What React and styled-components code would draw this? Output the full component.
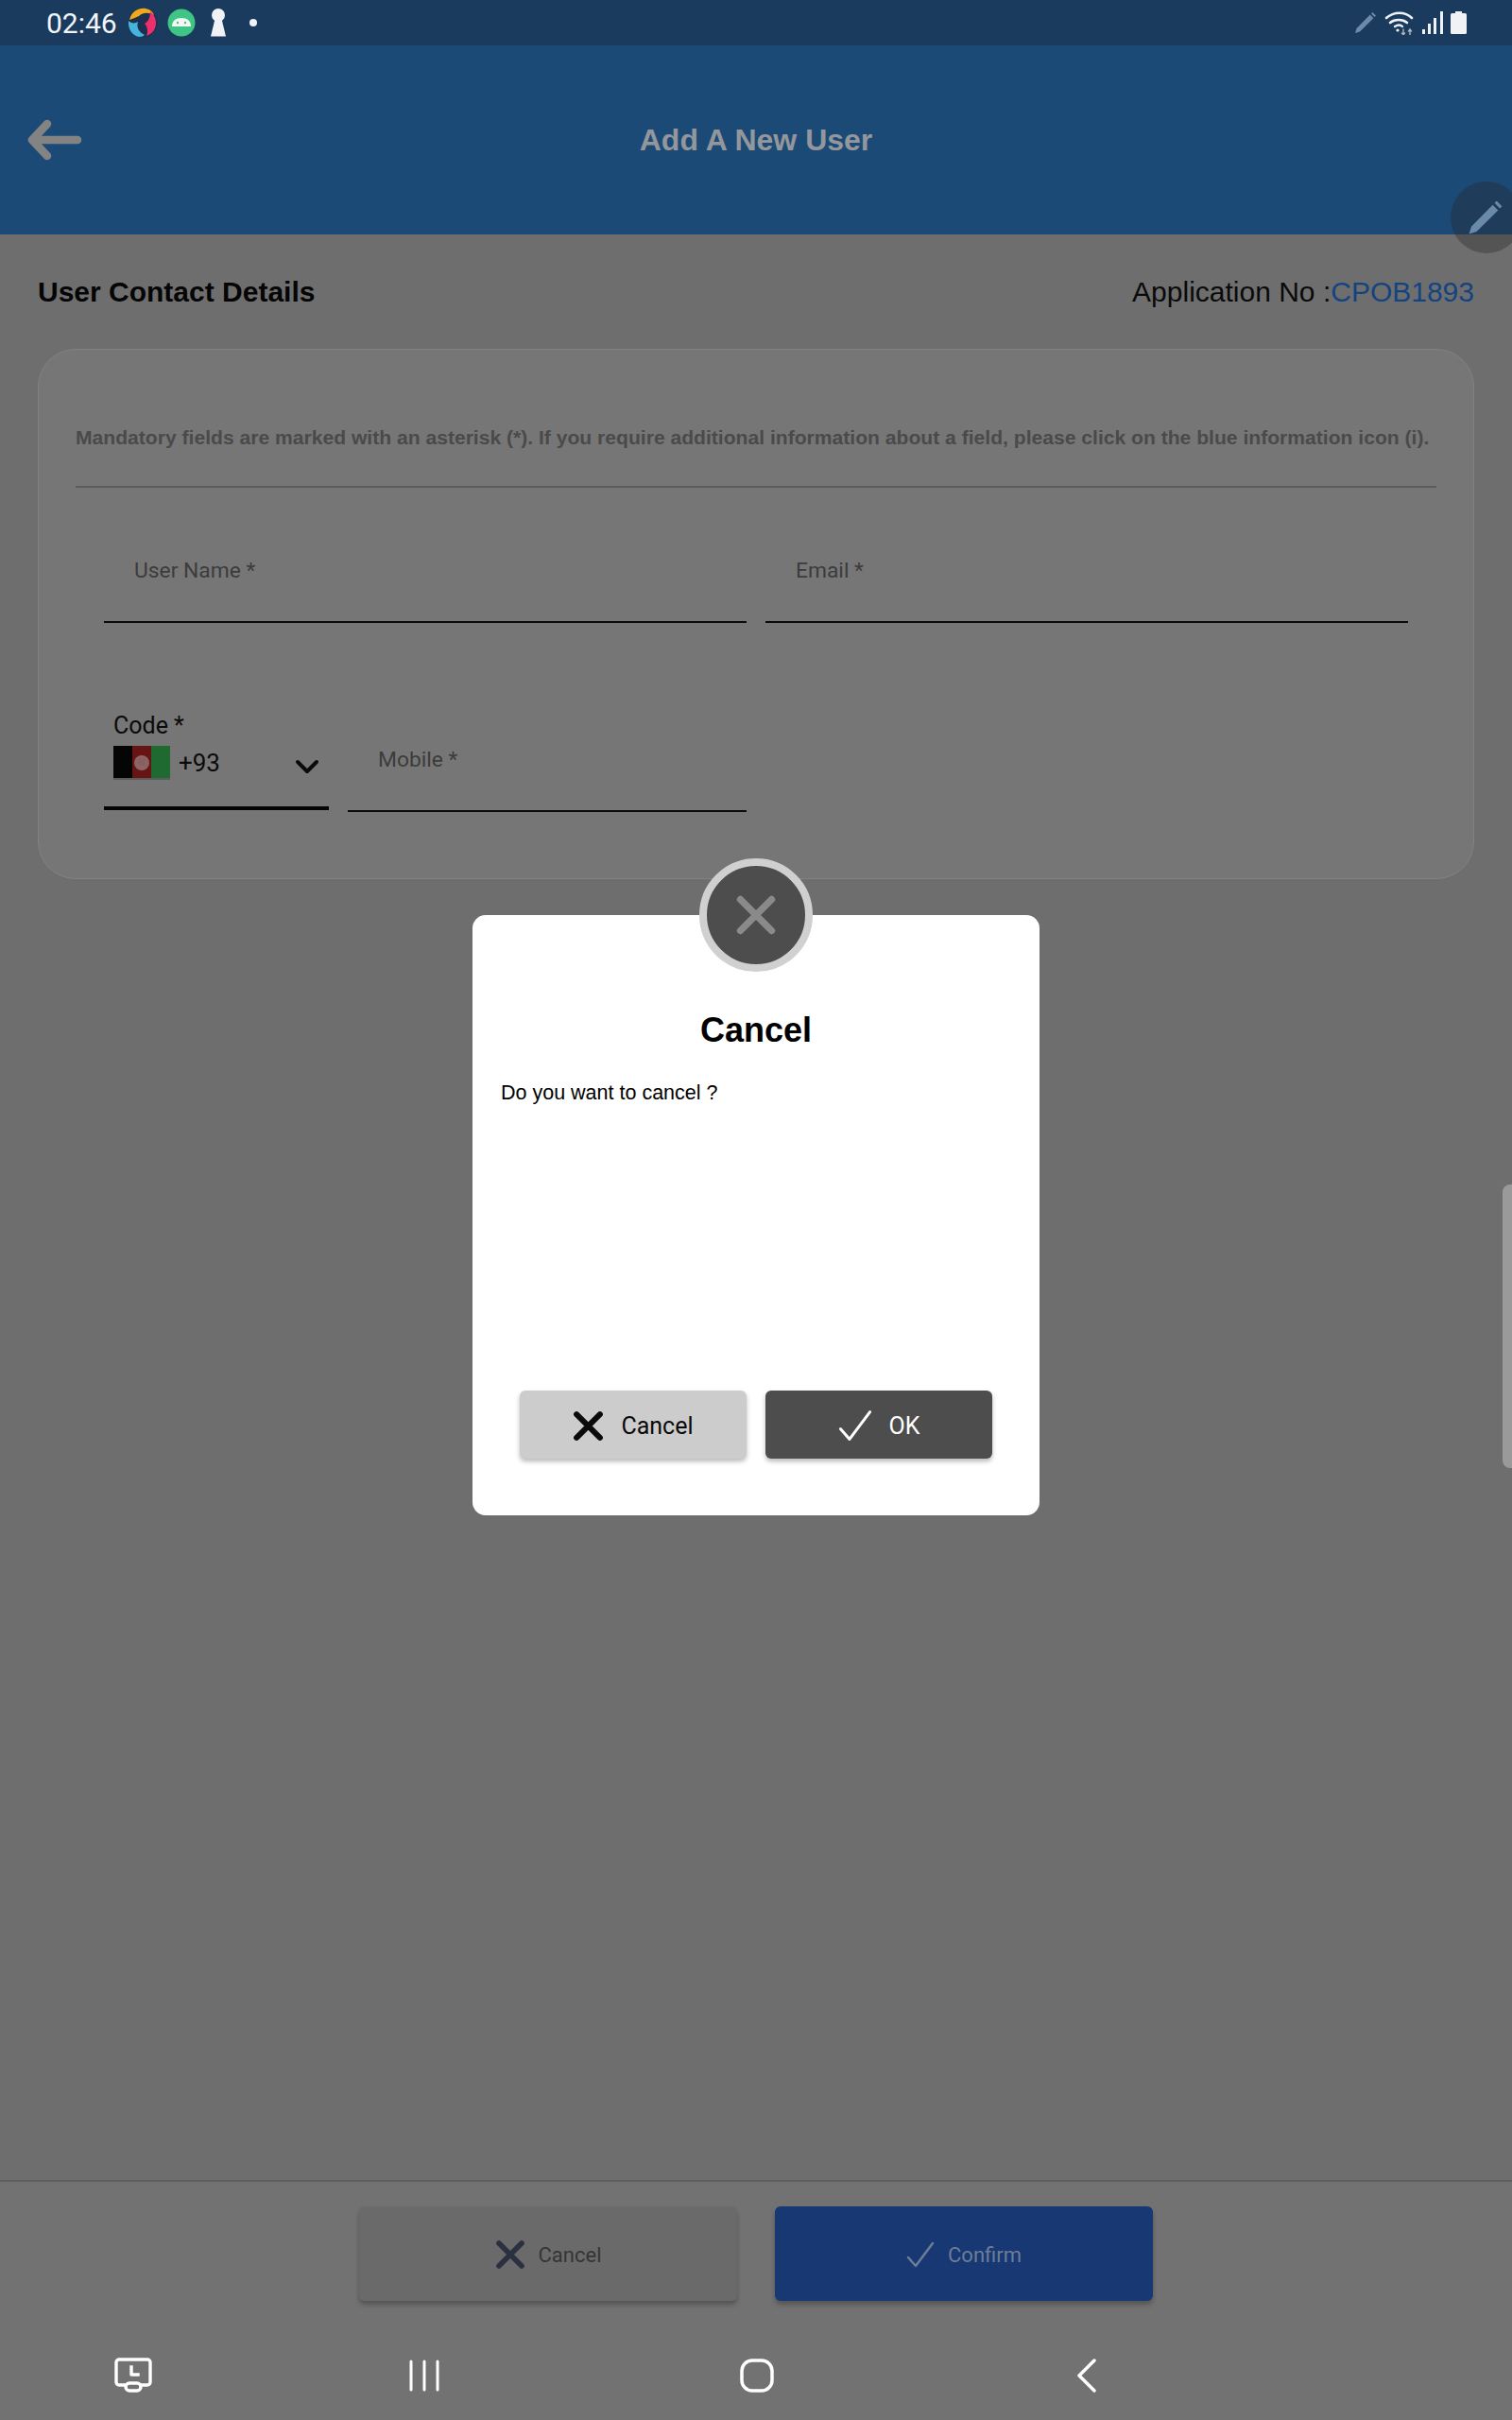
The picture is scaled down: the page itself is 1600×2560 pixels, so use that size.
import React from "react";
import styled, { createGlobalStyle } from "styled-components";

const GlobalStyle = createGlobalStyle`
  html, body {
    margin: 0;
    padding: 0;
    background: #6e6e6e;
    font-family: "Liberation Sans", Arial, sans-serif;
  }
  * { box-sizing: border-box; }
`;

function Swirl() {
  return (
    <svg width="32" height="32" viewBox="0 0 32 32">
      <circle cx="16" cy="16" r="15.5" fill="#1c3050" />
      <path d="M2 13C4 4 12 0 19 1c5 1 8 4 9 7-5-3-12-3-16 1-2 1-5 2-10 4z" fill="#f2a91c" />
      <path d="M24 4c6 5 8 13 4 20-2 3-5 5-8 6 2-5 1-10-2-13 4-2 6-7 6-13z" fill="#ee2f6c" />
      <path d="M1 14c3 3 7 3 10 1-2 6 1 11 7 14-1 1-3 2-6 2C5 30 0 22 1 14z" fill="#45b5dc" />
    </svg>
  );
}

function AndroidBadge() {
  return (
    <svg width="30" height="30" viewBox="0 0 30 30">
      <circle cx="15" cy="15" r="14.5" fill="#3fc585" />
      <path d="M5 19c0-6 4-9 10-9s10 3 10 9z" fill="#f3f8f5" />
      <circle cx="11" cy="15" r="1.2" fill="#3fc585" />
      <circle cx="19" cy="15" r="1.2" fill="#3fc585" />
    </svg>
  );
}

function Keyhole() {
  return (
    <svg width="18" height="30" viewBox="0 0 18 30">
      <circle cx="9" cy="7" r="7" fill="#f0f2f6" />
      <path d="M5.5 11h7L17 29.5H1z" fill="#f0f2f6" />
    </svg>
  );
}

function Pencil({ size, color }) {
  return (
    <svg width={size} height={size} viewBox="0 0 24 24">
      <path d="M1 23l1.6-5L16.8 3.6l3.6 3.6L6 21.4z" fill={color} />
      <path d="M18 2.4l1.4-1.4 3.6 3.6-1.4 1.4z" fill={color} />
    </svg>
  );
}

function Wifi() {
  return (
    <svg width="32" height="25" viewBox="0 0 32 25" fill="none" stroke="#eef1f5" strokeLinecap="round">
      <path d="M2 7c8-7 20-7 27 0" strokeWidth="2.6" />
      <path d="M6 12c5-4 13-4 18 0" strokeWidth="2.6" />
      <path d="M11 16c3-2 6-2 8 0" strokeWidth="2.4" />
      <circle cx="14" cy="20" r="1.6" fill="#eef1f5" stroke="none" />
      <path d="M20 19v6M18.500 23l1.500 2 1.500-2M27 25v-6M25.500 21l1.500-2 1.500 2" stroke="#a8b6c6" strokeWidth="1.400" />
    </svg>
  );
}

function Signal() {
  return (
    <svg width="22" height="24" viewBox="0 0 22 24" fill="#eef1f5">
      <rect x="0" y="19" width="3" height="5" />
      <rect x="6" y="13" width="3" height="11" />
      <rect x="12" y="7" width="3" height="17" />
      <rect x="19" y="0" width="3" height="24" />
    </svg>
  );
}

function Battery() {
  return (
    <svg width="17" height="24" viewBox="0 0 17 24" fill="#f0f2f6">
      <rect x="5" y="0" width="7" height="3" />
      <rect x="0" y="2" width="17" height="22" rx="1.500" />
    </svg>
  );
}

function BackArrow() {
  return (
    <svg width="60" height="44" viewBox="0 0 60 44" fill="none" stroke="#838383" strokeWidth="8.500" strokeLinecap="round" strokeLinejoin="round">
      <path d="M54 22H6M22 5L6 22l16 17" />
    </svg>
  );
}

function CrossIcon({ size, color, weight }) {
  return (
    <svg width={size} height={size} viewBox="0 0 24 24" fill="none" stroke={color} strokeWidth={weight} strokeLinecap="round">
      <path d="M3 3l18 18M21 3L3 21" />
    </svg>
  );
}

function CheckIcon({ size, color }) {
  return (
    <svg width={size} height={size} viewBox="0 0 30 30" fill="none" stroke={color} strokeWidth="2.500" strokeLinecap="round" strokeLinejoin="round">
      <path d="M2 18l8 9L28 3" />
    </svg>
  );
}

function Chevron() {
  return (
    <svg width="26" height="16" viewBox="0 0 26 16" fill="none" stroke="#0a0a0a" strokeWidth="4" strokeLinecap="round" strokeLinejoin="round">
      <path d="M3 3l10 10L23 3" />
    </svg>
  );
}

function AfghanFlag() {
  return (
    <svg width="60" height="36" viewBox="0 0 60 36">
      <rect width="20" height="36" fill="#050505" />
      <rect x="20" width="20" height="36" fill="#671414" />
      <rect x="40" width="20" height="36" fill="#1f6a30" />
      <circle cx="30" cy="18" r="8" fill="#8c6463" />
      <circle cx="30" cy="17" r="4" fill="#88605f" />
      <rect y="34" width="60" height="2" fill="#5c5c5c" />
    </svg>
  );
}

function RecentScreen() {
  return (
    <svg width="42" height="38" viewBox="0 0 42 38" fill="none" stroke="#fff" strokeWidth="3.400" strokeLinejoin="round">
      <path d="M13 29H6a3 3 0 0 1-3-3V5a3 3 0 0 1 3-3h30a3 3 0 0 1 3 3v21a3 3 0 0 1-3 3h-7" />
      <rect x="13" y="27" width="16" height="8" rx="4" />
      <path d="M19 10v8h7" strokeLinecap="square" />
    </svg>
  );
}

function RecentsBars() {
  return (
    <svg width="34" height="34" viewBox="0 0 34 34" stroke="#fff" strokeWidth="3" strokeLinecap="round">
      <path d="M3 2v30M17 2v30M31 2v30" />
    </svg>
  );
}

function HomeSquircle() {
  return (
    <svg width="36" height="36" viewBox="0 0 36 36" fill="none" stroke="#fff" strokeWidth="3.500">
      <rect x="2" y="2" width="32" height="32" rx="11" />
    </svg>
  );
}

function NavBack() {
  return (
    <svg width="24" height="36" viewBox="0 0 24 36" fill="none" stroke="#fff" strokeWidth="3.500" strokeLinecap="round" strokeLinejoin="round">
      <path d="M20 2L4 18l16 16" />
    </svg>
  );
}

const Screen = styled.div`
  position: relative;
  display: flex;
  flex-direction: column;
  width: 1600px;
  height: 2560px;
  overflow: hidden;
  background: #6e6e6e;
`;

const StatusBar = styled.div`
  display: flex;
  align-items: center;
  justify-content: space-between;
  height: 48px;
  padding: 0 48px 0 49px;
  background: #1a3a5e;
`;

const StatusGroup = styled.div`
  display: flex;
  align-items: center;
  gap: ${(p) => p.$gap}px;
`;

const Clock = styled.span`
  margin-right: 1px;
  font-family: Roboto, sans-serif;
  font-size: 30px;
  color: #f2f4f8;
`;

const KeyholeSlot = styled.span`
  margin-left: 5px;
  line-height: 0;
`;

const Dot = styled.span`
  width: 8px;
  height: 8px;
  margin-left: 14px;
  border-radius: 50%;
  background: #eef1f6;
`;

const Header = styled.header`
  position: relative;
  display: flex;
  align-items: center;
  justify-content: center;
  height: 200px;
  background: #1c4a77;
`;

const BackButton = styled.span`
  position: absolute;
  left: 28px;
  top: 78px;
  line-height: 0;
`;

const HeaderTitle = styled.h1`
  margin: 0;
  font-size: 32px;
  font-weight: 700;
  color: #93979c;
`;

const EditFab = styled.div`
  position: absolute;
  left: 1535px;
  top: 192px;
  display: flex;
  align-items: center;
  justify-content: center;
  width: 76px;
  height: 76px;
  padding-right: 2px;
  border-radius: 50%;
  background: rgba(40, 40, 40, 0.36);
`;

const Main = styled.main`
  flex: 1;
  padding: 0 40px;
`;

const SectionHead = styled.div`
  display: flex;
  align-items: center;
  justify-content: space-between;
  height: 121px;
`;

const SectionTitle = styled.h2`
  margin: 0;
  font-size: 30px;
  font-weight: 700;
  color: #050505;
`;

const AppNumber = styled.div`
  font-size: 30px;
  color: #0a0a0a;
`;

const AppCode = styled.span`
  color: #144480;
`;

const Card = styled.section`
  height: 561px;
  padding: 0 39px;
  background: #767676;
  border: 1px solid #828282;
  border-radius: 40px;
`;

const Notice = styled.p`
  height: 146px;
  margin: 0;
  padding-top: 79px;
  border-bottom: 2px solid #5c5c5c;
  font-size: 21.100px;
  font-weight: 700;
  line-height: 27px;
  white-space: nowrap;
  color: #4a4a4a;
`;

const FieldRow = styled.div`
  display: grid;
  grid-template-columns: 680px 680px;
  gap: 20px;
  margin: 0 30px;
`;

const TextField = styled.div`
  height: ${(p) => p.$height}px;
  padding: ${(p) => p.$top}px 0 0 ${(p) => p.$left}px;
  border-bottom: 2px solid #0a0a0a;
  font-family: Roboto, sans-serif;
  font-size: 22.800px;
  line-height: 26px;
  color: #3c3c3c;
`;

const MobileRow = styled.div`
  display: grid;
  grid-template-columns: 238px 422px;
  gap: 20px;
  margin: 76px 30px 0;
`;

const CodeField = styled.div`
  height: 122px;
  padding: 18px 10px 0;
  border-bottom: 4px solid #050505;
  font-family: Roboto, sans-serif;
  color: #0a0a0a;
`;

const CodeLabel = styled.div`
  margin-bottom: 6px;
  font-size: 25px;
  line-height: 30px;
`;

const CodeValue = styled.div`
  display: flex;
  align-items: center;
  font-size: 26px;
`;

const Flag = styled.span`
  line-height: 0;
  filter: blur(0.7px);
`;

const DialCode = styled.span`
  margin-left: 9px;
`;

const ChevronSlot = styled.span`
  margin: 8px 0 0 auto;
  line-height: 0;
`;

const Handle = styled.div`
  position: absolute;
  right: 0;
  top: 1253px;
  width: 10px;
  height: 300px;
  border-radius: 8px 0 0 8px;
  background: #9a9a9a;
`;

const BottomBar = styled.div`
  display: flex;
  justify-content: center;
  gap: 40px;
  height: 158px;
  padding-top: 26px;
  background: #727272;
  border-top: 2px solid #5f5f5f;
`;

const BarButton = styled.div`
  display: flex;
  align-items: center;
  justify-content: center;
  gap: ${(p) => p.$gap}px;
  width: 400px;
  height: 100px;
  padding-top: 2px;
  border-radius: 6px;
  background: ${(p) => (p.$primary ? "#173872" : "#6a6a6a")};
  box-shadow: 0 4px 5px rgba(0, 0, 0, 0.25);
  font-family: Roboto, sans-serif;
  font-size: 22px;
  color: ${(p) => (p.$primary ? "#6d7d99" : "#353535")};
`;

const NavBar = styled.nav`
  display: flex;
  align-items: center;
  height: 96px;
  padding-top: 2px;
  background: #727272;
`;

const NavSlot = styled.span`
  display: flex;
  justify-content: center;
  width: ${(p) => p.$width}px;
  margin-left: ${(p) => p.$left}px;
  line-height: 0;
`;

const Modal = styled.div`
  position: absolute;
  left: 500px;
  top: 968px;
  display: flex;
  flex-direction: column;
  width: 600px;
  height: 635px;
  padding: 92px 30px 0;
  border-radius: 14px;
  background: #fff;
`;

const ModalBadge = styled.div`
  position: absolute;
  left: 240px;
  top: -60px;
  display: flex;
  align-items: center;
  justify-content: center;
  width: 120px;
  height: 120px;
  border: 8px solid #d0d0d0;
  border-radius: 50%;
  background: #4d4d4d;
`;

const ModalTitle = styled.h3`
  margin: 0;
  font-size: 36px;
  line-height: 60px;
  font-weight: 700;
  text-align: center;
  color: #000;
`;

const ModalText = styled.p`
  margin: 23px 0 0;
  font-size: 21.500px;
  line-height: 26px;
  color: #000;
`;

const ModalActions = styled.div`
  display: flex;
  justify-content: center;
  gap: 20px;
  margin-top: 302px;
`;

const ModalButton = styled.div`
  display: flex;
  align-items: center;
  justify-content: center;
  gap: ${(p) => p.$gap}px;
  width: 240px;
  height: 72px;
  padding-top: 2px;
  border-radius: 6px;
  background: ${(p) => (p.$dark ? "#4d4d4d" : "#cccccc")};
  box-shadow: 0 3px 5px rgba(0, 0, 0, 0.28);
  font-family: Roboto, sans-serif;
  font-size: 25px;
  color: ${(p) => (p.$dark ? "#fff" : "#0a0a0a")};
`;

export default function App() {
  return (
    <Screen>
      <GlobalStyle />
      <StatusBar>
        <StatusGroup $gap={10}>
          <Clock>02:46</Clock>
          <Swirl />
          <AndroidBadge />
          <KeyholeSlot>
            <Keyhole />
          </KeyholeSlot>
          <Dot />
        </StatusGroup>
        <StatusGroup $gap={8}>
          <Pencil size={24} color="#6f8aa8" />
          <Wifi />
          <Signal />
          <Battery />
        </StatusGroup>
      </StatusBar>
      <Header>
        <BackButton>
          <BackArrow />
        </BackButton>
        <HeaderTitle>Add A New User</HeaderTitle>
      </Header>
      <EditFab>
        <Pencil size={38} color="#6a8aab" />
      </EditFab>
      <Main>
        <SectionHead>
          <SectionTitle>User Contact Details</SectionTitle>
          <AppNumber>
            Application No :<AppCode>CPOB1893</AppCode>
          </AppNumber>
        </SectionHead>
        <Card>
          <Notice>
            Mandatory fields are marked with an asterisk (*). If you require additional information about a field, please click on the blue information icon (i).
          </Notice>
          <FieldRow>
            <TextField $height={143} $top={75} $left={32}>User Name *</TextField>
            <TextField $height={143} $top={75} $left={32}>Email *</TextField>
          </FieldRow>
          <MobileRow>
            <CodeField>
              <CodeLabel>Code *</CodeLabel>
              <CodeValue>
                <Flag>
                  <AfghanFlag />
                </Flag>
                <DialCode>+93</DialCode>
                <ChevronSlot>
                  <Chevron />
                </ChevronSlot>
              </CodeValue>
            </CodeField>
            <TextField $height={124} $top={56} $left={32}>Mobile *</TextField>
          </MobileRow>
        </Card>
      </Main>
      <Handle />
      <BottomBar>
        <BarButton $gap={14}>
          <CrossIcon size={32} color="#2b3040" weight={4.2} />
          Cancel
        </BarButton>
        <BarButton $primary $gap={14}>
          <CheckIcon size={30} color="#6d7d99" />
          Confirm
        </BarButton>
      </BottomBar>
      <NavBar>
        <NavSlot $width={42} $left={120}><RecentScreen /></NavSlot>
        <NavSlot $width={34} $left={270}><RecentsBars /></NavSlot>
        <NavSlot $width={36} $left={317}><HomeSquircle /></NavSlot>
        <NavSlot $width={24} $left={319}><NavBack /></NavSlot>
      </NavBar>
      <Modal>
        <ModalBadge>
          <CrossIcon size={44} color="#8a8a8a" weight={4} />
        </ModalBadge>
        <ModalTitle>Cancel</ModalTitle>
        <ModalText>Do you want to cancel ?</ModalText>
        <ModalActions>
          <ModalButton $gap={18}>
            <CrossIcon size={33} color="#0a0a0a" weight={4.4} />
            Cancel
          </ModalButton>
          <ModalButton $dark $gap={18}>
            <CheckIcon size={36} color="#fff" />
            OK
          </ModalButton>
        </ModalActions>
      </Modal>
    </Screen>
  );
}
